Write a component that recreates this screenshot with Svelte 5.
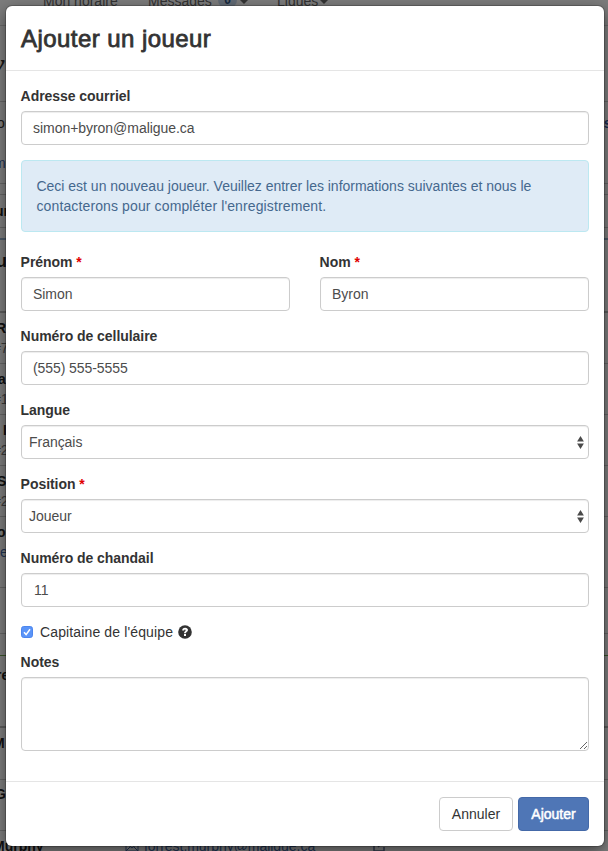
<script>
  let email = $state('simon+byron@maligue.ca');
  let firstName = $state('Simon');
  let lastName = $state('Byron');
  let phone = $state('(555) 555-5555');
  let jersey = $state('11');
  let captain = $state(true);
  let notes = $state('');

  // Roster page rows behind the dialog: height, top padding, and clipped lines of text
  const rows = [
    { h: 76, pad: 26, logo: 'y' },
    { h: 82, pad: 11, lines: [['o', -3, ''], ['', 0, ''], ['m', -6, 'link']], end: 'ss' },
    { h: 11, pad: 0 },
    { h: 33, pad: 6, lines: [['un', -5, 'bold']] },
    { h: 12, pad: 0, kind: 'blue' },
    { h: 73, pad: 11, kind: 'thick', lines: [['u', -4, 'big']] },
    { h: 51, pad: 5, lines: [['R', -4, 'bold'], ['#7', -7, 'muted']] },
    { h: 51, pad: 5, lines: [['a', -2, 'bold'], ['#1', -7, 'muted']] },
    { h: 51, pad: 5, lines: [['I', 3, 'bold'], ['#2', -7, 'muted']] },
    { h: 51, pad: 5, lines: [['S', -3, 'bold'], ['#2', -7, 'muted']] },
    { h: 71, pad: 5, lines: [['o', -3, 'bold'], ['le', -3, 'link']] },
    { h: 46, pad: 0 },
    { h: 22, pad: 0, kind: 'green' },
    { h: 72, pad: 9, kind: 'thick', lines: [['re', -4, 'bold']] },
    { h: 52, pad: 5, lines: [['M', -7, 'bold']] },
    { h: 51, pad: 4, lines: [['G', -5, 'bold']] }
  ];
</script>

<div class="screen">
  <div class="page">
    <nav>
      <span class="n1">Mon horaire</span>
      <span class="n2">Messages</span>
      <span class="count">0</span><i class="caret"></i>
      <span class="n3">Ligues</span><i class="caret near"></i>
    </nav>
    {#each rows as row}
      <div class="row {row.kind ?? ''}" style="height:{row.h}px;padding-top:{row.pad}px">
        {#if row.logo}<div class="logo">{row.logo}</div>{/if}
        <div class="cell">
          {#each row.lines ?? [] as [text, indent, tone]}
            <div class="line {tone}" style="margin-left:{indent}px">{text}</div>
          {/each}
        </div>
        {#if row.end}<div class="end">{row.end}</div>{/if}
      </div>
    {/each}
    <div class="player">
      <b>Murphy</b>
      <svg class="mail" width="14" height="12" viewBox="0 0 14 12"><path d="M1 2h12v8H1zM1 2l6 5 6-5M1 10l4-4M13 10L9 6" fill="none" stroke="#4469a8" /></svg>
      <span>forrest.murphy@maligue.ca</span>
      <svg class="edit" width="14" height="14" viewBox="0 0 14 14"><path d="M8 2H2v10h10V8M6 8l6-6" fill="none" stroke="#5d7197" stroke-width="1.5" /></svg>
    </div>
  </div>

  <div class="backdrop">
    <div class="modal" role="dialog" aria-label="Ajouter un joueur">
      <header><h4>Ajouter un joueur</h4></header>
      <div class="body">
        <div class="group">
          <label for="email">Adresse courriel</label>
          <input class="control" id="email" bind:value={email} />
        </div>
        <div class="alert">
          <div class="l1">Ceci est un nouveau joueur. Veuillez entrer les informations suivantes et nous le</div>
          <div class="l2">contacterons pour compléter l'enregistrement.</div>
        </div>
        <div class="pair">
          <div class="group">
            <label for="first">Prénom <em>*</em></label>
            <input class="control" id="first" bind:value={firstName} />
          </div>
          <div class="group">
            <label for="last">Nom <em>*</em></label>
            <input class="control" id="last" bind:value={lastName} />
          </div>
        </div>
        <div class="group">
          <label for="phone">Numéro de cellulaire</label>
          <input class="control phone" id="phone" bind:value={phone} />
        </div>
        {#snippet picker(value)}
          <div class="control select">
            <span>{value}</span>
            <svg width="7" height="13" viewBox="0 0 7 13"><path d="M3.5 0L6.9 5.6H.1zM3.5 13L.1 7.4h6.8z" fill="#4a4a4a" /></svg>
          </div>
        {/snippet}
        <div class="group">
          <div class="label">Langue</div>
          {@render picker('Français')}
        </div>
        <div class="group">
          <div class="label">Position <em>*</em></div>
          {@render picker('Joueur')}
        </div>
        <div class="group">
          <label for="jersey">Numéro de chandail</label>
          <input class="control jersey" id="jersey" bind:value={jersey} />
        </div>
        <button type="button" class="check" onclick={() => (captain = !captain)}>
          <svg class="box" width="12" height="12" viewBox="0 0 12 12">
            <rect x=".5" y=".5" width="11" height="11" rx="2.2" fill={captain ? '#5a94f8' : '#fff'} stroke={captain ? '#4c86ee' : '#aaa'} />
            {#if captain}<path d="M3 6.3l2.1 2.3L9 3.2" fill="none" stroke="#fff" stroke-width="1.5" />{/if}
          </svg>
          <span>Capitaine de l'équipe</span>
          <svg class="help" width="14" height="14" viewBox="0 0 14 14">
            <circle cx="7" cy="7" r="6.8" fill="#333" />
            <path d="M4.2 5.5C4.2 3.7 5.3 2.7 7.1 2.7s2.9.9 2.9 2.4c0 1.7-2 1.8-2 3.1H6c0-1.8 1.6-2 1.6-3 0-.4-.2-.6-.6-.6-.5 0-.8.3-.8.9zM6 9h2v2H6z" fill="#fff" />
          </svg>
        </button>
        <div class="group">
          <label for="notes">Notes</label>
          <div class="area">
            <textarea class="control" id="notes" bind:value={notes}></textarea>
            <svg class="grip" width="9" height="9" viewBox="0 0 9 9"><path d="M1 8L8 1M5 8l3-3" stroke="#555" stroke-width=".9" /></svg>
          </div>
        </div>
      </div>
      <footer>
        <button type="button" class="btn cancel"><span>Annuler</span></button>
        <button type="button" class="btn primary"><span>Ajouter</span></button>
      </footer>
    </div>
  </div>
</div>

<style>
  :global(body) { overflow: hidden; }
  .screen, .screen * { box-sizing: border-box; }
  .screen {
    position: relative;
    width: 608px;
    height: 851px;
    overflow: hidden;
    background: #fff;
    color: #333;
    font: 14px/20px "Liberation Sans", Arial, sans-serif;
  }
  nav {
    display: flex;
    height: 26px;
    padding-left: 43px;
    border-bottom: 1px solid #d5d5d5;
    background: #f8f8f8;
    color: #666;
    line-height: 18px;
  }
  nav span { height: 18px; margin-top: -8px; white-space: nowrap; }
  .n1 { width: 105px; }
  .n2 { width: 70px; }
  nav .count { width: 19px; height: 18px; margin-top: -9px; border-radius: 9px; background: #c3d5e8; color: #2b4f7d; font-weight: bold; font-size: 12px; text-align: center; }
  .caret { width: 0; height: 4px; margin: 0 29px 0 3px; border: 4px solid transparent; border-top-color: #666; border-bottom: 0; }
  .caret.near { margin-left: 2px; }
  .row { display: flex; justify-content: space-between; border-bottom: 1px solid #ccc; overflow: hidden; white-space: nowrap; }
  .row.thick { border-bottom: 2px solid #bbb; }
  .row.blue { border-bottom: 2px solid #9ab4d2; }
  .row.green { border-bottom-color: #76ad54; }
  .logo { width: 18px; margin-left: -8px; font: italic bold 28px/24px "Liberation Serif", serif; }
  .line { height: 20px; }
  .bold { color: #222; font-weight: bold; }
  .big { color: #222; font-size: 18px; font-weight: bold; }
  .muted { color: #777; }
  .link { color: #4469a8; }
  .end { width: 6px; color: #3659a8; font-weight: bold; text-indent: -6px; }
  .player { display: flex; align-items: flex-start; padding-top: 5px; white-space: nowrap; color: #4469a8; }
  .player b { width: 125px; margin-left: -7px; color: #222; }
  .player .mail { margin: 5px 5px 0 7px; }
  .player span { width: 228px; letter-spacing: -.04px; }
  .player .edit { margin-top: 3px; }
  .backdrop {
    position: absolute;
    inset: 0;
    padding: 6px 4px 5px 6px;
    background: rgba(0, 0, 0, .5);
  }
  .modal {
    width: 598px;
    height: 840px;
    border-radius: 6px;
    background: #fff;
    box-shadow: 0 0 0 1px rgba(0, 0, 0, .2), 0 5px 15px rgba(0, 0, 0, .5);
  }
  header { height: 65px; padding: 15px; border-bottom: 1px solid #e5e5e5; }
  h4 { margin: 0; font-size: 24px; font-weight: 400; line-height: 36px; letter-spacing: .44px; -webkit-text-stroke: .8px #333; }
  .body { height: 710px; padding: 15px; }
  .group { margin-bottom: 15px; }
  label, .label { display: block; height: 20px; margin-bottom: 5px; font-weight: bold; letter-spacing: -.05px; text-indent: -.4px; }
  em { color: #e00000; font-style: normal; }
  .control {
    display: block;
    width: 100%;
    height: 34px;
    margin: 0;
    padding: 6px 11px;
    border: 1px solid #ccc;
    border-radius: 4px;
    outline: 0;
    background: #fff;
    box-shadow: inset 0 1px 1px rgba(0, 0, 0, .075);
    color: #4c4c4c;
    font: 14px/20px "Liberation Sans", Arial, sans-serif;
    letter-spacing: -.04px;
  }
  .phone { letter-spacing: -.08px; }
  .jersey { padding-left: 12px; }
  .select { display: flex; justify-content: space-between; align-items: center; padding: 6px 4px 6px 7px; }
  .alert { height: 72px; margin-bottom: 20px; padding: 15px 15px 15px 14.5px; border: 1px solid #bce8f1; border-radius: 4px; background: #dfebf6; color: #45688e; white-space: nowrap; }
  .l1 { letter-spacing: -.012px; }
  .l2 { letter-spacing: .12px; }
  .pair { display: grid; grid-template-columns: 1fr 1fr; gap: 30px; }
  .check { display: flex; align-items: center; height: 20px; margin: 0 0 10px; padding: 0; border: 0; background: none; color: #333; font: inherit; }
  .check span { margin: 0 5px 0 7px; letter-spacing: .13px; }
  .help { margin-top: -1px; }
  .area { position: relative; }
  textarea.control { height: 74px; resize: none; }
  .grip { position: absolute; right: 1px; bottom: 1px; }
  footer { display: flex; justify-content: flex-end; gap: 5px; height: 65px; padding: 15px; border-top: 1px solid #e5e5e5; }
  .btn { height: 34px; padding: 0; border: 1px solid #ccc; border-radius: 4px; background: #fff; color: #333; font: inherit; }
  .cancel { width: 74px; }
  .primary { width: 71px; border-color: #4469a8; background: #4f76b6; color: #fff; -webkit-text-stroke: .5px #fff; }
</style>
